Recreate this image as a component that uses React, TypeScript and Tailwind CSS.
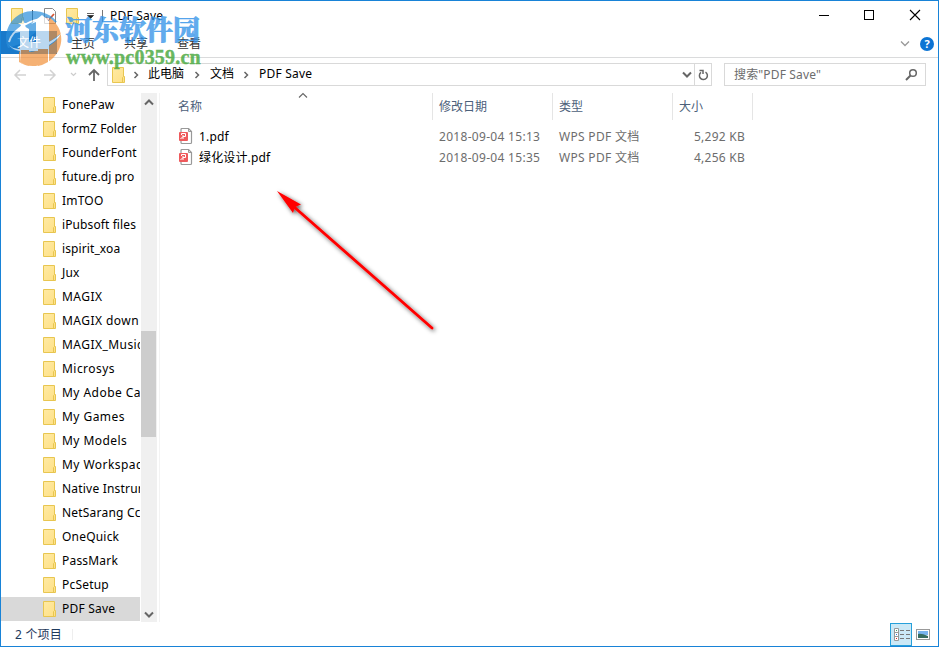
import React from 'react';

const folders = [
  'FonePaw', 'formZ Folder', 'FounderFont', 'future.dj pro', 'ImTOO', 'iPubsoft files',
  'ispirit_xoa', 'Jux', 'MAGIX', 'MAGIX down', 'MAGIX_Music', 'Microsys', 'My Adobe Ca',
  'My Games', 'My Models', 'My Workspac', 'Native Instrur', 'NetSarang Cc', 'OneQuick',
  'PassMark', 'PcSetup', 'PDF Save',
];

const files = [
  { name: '1.pdf', date: '2018-09-04 15:13', type: 'WPS PDF 文档', size: '5,292 KB' },
  { name: '绿化设计.pdf', date: '2018-09-04 15:35', type: 'WPS PDF 文档', size: '4,256 KB' },
];

function tracking(name: string) {
  if (name.startsWith('M')) return 'tracking-[0.450px]';
  if (name.startsWith('i') || name.startsWith('f')) return 'tracking-[0.100px]';
  return 'tracking-[0.200px]';
}

function Folder() {
  return (
    <svg width="13" height="16" viewBox="0 0 13 16" className="block shrink-0">
      <defs>
        <linearGradient id="folder" x1="0" y1="0" x2="1" y2="1">
          <stop offset="0" stopColor="#ffeaa3" />
          <stop offset="1" stopColor="#fee086" />
        </linearGradient>
      </defs>
      <path d="M.5 .5H11.5V9.5H12.5V15.5H.5Z" fill="url(#folder)" stroke="#e8c650" />
      <path d="M10.5 15.5V10.5L11.5 9.5" fill="none" stroke="#e8c650" />
    </svg>
  );
}

function PdfIcon() {
  return (
    <svg width="15" height="17" viewBox="0 0 15 17" className="block shrink-0">
      <path d="M3 1.5Q3 .5 4 .5H10.5L13.500 3.500V14.500Q13.500 15.500 12.500 15.500H4Q3 15.500 3 14.500Z" fill="#fff" stroke="#999" strokeWidth="1.200" />
      <path d="M10.5 .5V3.500H13.500" fill="none" stroke="#999" />
      <rect x="1" y="4" width="9" height="9" rx="1" fill="#ee5a5c" />
      <path d="M3.500 7V5.500H7.500V8.500H5L2.500 11M5 7V11" fill="none" stroke="#fff" />
    </svg>
  );
}

function Chevron({ dir, color = '#666', w = 1.5 }: { dir: 'up' | 'down' | 'right'; color?: string; w?: number }) {
  const d = dir === 'up' ? 'M1 6.5L5 2.5L9 6.5' : dir === 'down' ? 'M1 2.5L5 6.5L9 2.5' : 'M3.5 2L6.5 5L3.5 8';
  return (
    <svg width="10" height="10" viewBox="0 0 10 10" className="block shrink-0">
      <path d={d} fill="none" stroke={color} strokeWidth={w} />
    </svg>
  );
}

function Watermark() {
  return (
    <div className="pointer-events-none absolute left-0 top-0 h-[72px] w-[210px]">
      <svg width="66" height="70" viewBox="0 0 66 70" className="absolute -left-px -top-px">
        <g opacity=".7">
          <path d="M8 48C1 30 14 11 33 11C43 11 52 15 57 22C48 22 40 27 36 32L20 44Z" fill="#2b8edb" />
          <path d="M50 18C64 28 65 46 53 58C47 64 40 66 33 66C27 66 22 64 19 62V48L40 47Z" fill="#f1913a" />
          <path d="M6 41C7 55 42 51 60 34C56 50 12 62 6 41Z" fill="#2b8edb" />
          <path d="M8 43C12 54 42 50 61 34C50 52 14 58 8 43Z" fill="#fff" />
          <path d="M9 42C12 30 32 17 49 19" fill="none" stroke="#fff" strokeWidth="2" />
          <path d="M15 33L22 25L29 29V42H36V22L31 24L42 15L49 21V64Q44 66 38 66V51H29V66Q24 65 20 62V32Z" fill="#fff" />
          <path d="M21 50H29V66Q24 65 20 62ZM38 49H48V62Q43 65 38 66Z" fill="#f1913a" />
          <path d="M23 20L24.500 23L28 23L25 25L26 28L23 26.500L20 28L21 25L18 23L21.500 23Z" fill="#fff" />
        </g>
      </svg>
      <div className="absolute left-[64px] top-[10px] whitespace-nowrap font-['Noto_Serif_CJK_SC','Noto_Sans_CJK_SC',serif] text-[27px] font-black leading-[36px] text-[#2e8fe8]/75 [-webkit-text-stroke:0.500px_#4ba1ec]">河东软件园</div>
      <div className="absolute left-[65px] top-[45px] whitespace-nowrap font-['Liberation_Serif',serif] text-[20px] font-bold leading-[22px] tracking-[0.200px] text-[#3fa535]/80 [-webkit-text-stroke:0.400px_#5eb254]">www.pc0359.cn</div>
    </div>
  );
}

export default function App() {
  return (
    <div className="relative flex h-[647px] w-[939px] flex-col overflow-hidden border border-[#1883d7] bg-white font-['Noto_Sans','Noto_Sans_CJK_SC',sans-serif] text-[12px] leading-[16px] text-black">
      <header className="flex h-[30px] shrink-0 items-center pl-[10px]">
        <Folder />
        <span className="ml-[8px] h-[12px] w-px bg-[#555]" />
        <svg width="12" height="16" viewBox="0 0 12 16" className="ml-[11px]">
          <path d="M.5 .5H8.500L11.500 3.500V15.500H.5Z" fill="#fff" stroke="#888" />
          <path d="M2 9L4.500 12L10 6" stroke="#d85430" strokeWidth="1.800" fill="none" />
        </svg>
        <span className="ml-[10px]"><Folder /></span>
        <svg width="7" height="6" viewBox="0 0 7 6" className="ml-[8px]"><path d="M0 .5H7M.5 2.500H6.500L3.500 5.500Z" fill="#222" stroke="#222" strokeWidth=".7" /></svg>
        <span className="ml-[8px] h-[12px] w-px bg-[#777]" />
        <span className="ml-[7px] tracking-[0.200px]">PDF Save</span>
        <svg width="120" height="12" viewBox="0 0 120 12" className="-mt-[2px] ml-auto mr-[10px]" fill="none" stroke="#000">
          <path d="M11 6.500H21" /><rect x="56.500" y="1.500" width="9" height="9" /><path d="M102 1L112 11M112 1L102 11" strokeWidth="1.100" />
        </svg>
      </header>
      <nav className="flex h-[26px] shrink-0 items-start text-[#333]">
        <span className="flex h-[23px] w-[56px] items-center justify-center bg-[#1979ca] text-white">文件</span>
        <span className="ml-[14px] mt-[5px]">主页</span>
        <span className="ml-[29px] mt-[5px]">共享</span>
        <span className="ml-[29px] mt-[5px]">查看</span>
        <span className="ml-auto mt-[8px]"><Chevron dir="down" color="#999" w={1.3} /></span>
        <span className="ml-[10px] mr-[4px] mt-[6px] flex h-[14px] w-[14px] items-center justify-center rounded-full bg-[#0c74d4] text-[11px] font-bold text-white">?</span>
      </nav>
      <section className="flex h-[36px] shrink-0 items-start border-t border-[#dadbdc] pt-[5px]">
        <svg width="106" height="23" viewBox="0 0 106 23" className="shrink-0" fill="none">
          <path d="M14 12H25M19 7L14 12L19 17M43 12H54M49 7L54 12L49 17" stroke="#d2d2d2" strokeWidth="1.500" />
          <path d="M70 10L72.500 12.500L75 10" stroke="#ccc" strokeWidth="1.200" />
          <path d="M93 18V7M88 12L93 7L98 12" stroke="#666" strokeWidth="1.800" />
        </svg>
        <div className="flex h-[23px] w-[605px] shrink-0 items-center border border-[#d9d9d9] pl-[4px]">
          <Folder />
          <span className="ml-[6px]"><Chevron dir="right" /></span>
          <span className="-mt-[2px] ml-[7px] w-[37px] shrink-0">此电脑</span>
          <span className="ml-[7px]"><Chevron dir="right" /></span>
          <span className="-mt-[2px] ml-[8px] w-[25px] shrink-0">文档</span>
          <span className="ml-[6px]"><Chevron dir="right" /></span>
          <span className="-mt-[2px] ml-[8px] tracking-[0.200px]">PDF Save</span>
          <span className="ml-auto mr-[2px]"><Chevron dir="down" w={2} /></span>
          <span className="flex h-full w-[17px] items-center justify-center border-l border-[#d9d9d9]">
            <svg width="11" height="12" viewBox="0 0 11 12" fill="none" stroke="#666" strokeWidth="1.500"><path d="M7.500 3.200A4 4 0 1 1 3 3.400M1.500 1.500H5V5" /></svg>
          </span>
        </div>
        <div className="ml-[12px] flex h-[23px] w-[202px] items-center border border-[#d9d9d9] pl-[9px] pr-[7px] text-[#6d6d6d]">
          <span className="tracking-[0.150px]">搜索"PDF Save"</span>
          <svg width="13" height="13" viewBox="0 0 13 13" className="ml-auto" fill="none" stroke="#666"><circle cx="8" cy="5" r="3.300" strokeWidth="1.500" /><path d="M5.500 7.500L1 12" strokeWidth="2" /></svg>
        </div>
      </section>
      <main className="flex h-[529px] shrink-0">
        <aside className="w-[139px] shrink-0 overflow-hidden">
          {folders.map((f) => (
            <div key={f} className={`flex h-[24px] items-center whitespace-nowrap pl-[42px] ${f === 'PDF Save' ? 'bg-[#d9d9d9]' : ''}`}>
              <Folder /><span className={`ml-[6px] ${tracking(f)}`}>{f}</span>
            </div>
          ))}
        </aside>
        <div className="ml-px flex w-[16px] shrink-0 flex-col items-start bg-[#f0f0f0] pb-[2px] pt-[5px]">
          <span className="ml-[2.500px]"><Chevron dir="up" w={2} /></span>
          <span className="mt-[223px] h-[106px] w-[15px] bg-[#cdcdcd]" />
          <span className="ml-[2.500px] mt-auto"><Chevron dir="down" w={2} /></span>
        </div>
        <div className="ml-[2px] w-px bg-[#f3f3f3]" />
        <section className="relative flex-1">
          <div className="flex h-[27px] items-center text-[#4c607a]">
            <span className="flex h-full w-[273px] items-center border-r border-[#e5e5e5] pl-[18px]">名称</span>
            <span className="flex h-full w-[120px] items-center border-r border-[#e5e5e5] pl-[6px]">修改日期</span>
            <span className="flex h-full w-[120px] items-center border-r border-[#e5e5e5] pl-[6px]">类型</span>
            <span className="flex h-full w-[80px] items-center border-r border-[#e5e5e5] pl-[6px]">大小</span>
          </div>
          <span className="absolute left-[137.500px] top-[-2px]"><Chevron dir="up" w={1.1} /></span>
          <div className="pt-[6px]">
            {files.map((f) => (
              <div key={f.name} className="flex h-[21px] items-center text-[#6d6d6d]">
                <span className="flex w-[279px] items-center pl-[18px] text-black"><PdfIcon /><span className="ml-[6px] tracking-[0.150px]">{f.name}</span></span>
                <span className="w-[120px] tracking-[0.300px]">{f.date}</span>
                <span className="w-[120px] tracking-[0.300px]">{f.type}</span>
                <span className="w-[66px] text-right tracking-[0.250px]">{f.size}</span>
              </div>
            ))}
          </div>
        </section>
      </main>
      <footer className="flex flex-1 items-center text-[#1e395b]">
        <span className="w-[71px] pl-[14px] pt-[2px] tracking-[0.200px]">2 个项目</span>
        <span className="h-[11px] w-px bg-[#eee]" />
        <span className="ml-auto flex h-[23px] w-[22px] items-center justify-center border border-[#26a0da] bg-[#cbe8f6]">
          <svg width="16" height="13" viewBox="0 0 16 13" className="ml-px shrink-0"><path d="M.5 .5H4.500V12.500H.5ZM0 4.500H5M0 8.500H5" fill="#fff" stroke="#999" /><path d="M6 2.500H10M12 2.500H16M6 6.500H10M12 6.500H16M6 10.500H10M12 10.500H16" stroke="#777" /><path d="M2 2H3V3H2Z" fill="#3b9a6a" /><path d="M2 6H3V7H2Z" fill="#2e7de0" /><path d="M2 10H3V11H2Z" fill="#d22" /></svg>
        </span>
        <svg width="14" height="11" viewBox="0 0 14 11" className="ml-[4px] mr-[8px]"><rect x=".5" y=".5" width="13" height="10" fill="#fff" stroke="#999" /><path d="M2 2H12V6H2Z" fill="#79b4ef" /><path d="M2 5Q5 4 12 7V9H2Z" fill="#376d61" /></svg>
      </footer>
      <svg width="190" height="160" viewBox="0 0 190 160" className="pointer-events-none absolute left-[258px] top-[179px]">
        <defs><filter id="shade" x="-20%" y="-20%" width="140%" height="140%"><feDropShadow dx="1.500" dy="1.500" stdDeviation="2.200" floodColor="#000" floodOpacity=".7" /></filter></defs>
        <g filter="url(#shade)" fill="#f00"><path d="M18 11L42 24.500L36 27L34 33Z" /><path d="M34 26L173 148" stroke="#f00" strokeWidth="2.800" strokeLinecap="round" /></g>
      </svg>
      <Watermark />
    </div>
  );
}
